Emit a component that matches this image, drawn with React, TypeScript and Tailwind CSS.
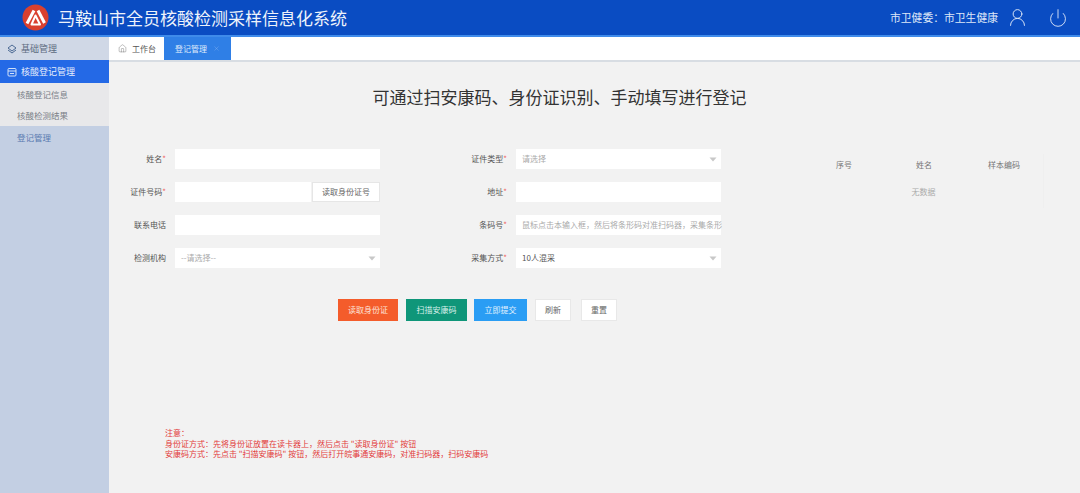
import React from 'react';
import { House, Power, UserRound, X } from 'lucide-react';

const font = 'font-["Noto_Sans_CJK_SC","Liberation_Sans",sans-serif]';

const Label = ({ text, required }: { text: string; required?: boolean }) => (
  <div className="flex justify-end items-center pr-[9px] text-[8px] text-[#555]">
    {text}
    {required && <span className="text-[#e66]">*</span>}
  </div>
);

const Input = ({ placeholder }: { placeholder?: string }) => (
  <div className="h-[20px] bg-white flex items-center pl-[6px] text-[8px] text-[#aaa] whitespace-nowrap">
    {placeholder}
  </div>
);

const Select = ({ value, dark }: { value: string; dark?: boolean }) => (
  <div className={`h-[20px] bg-white flex items-center justify-between pl-[6px] pr-[4px] text-[8px] ${dark ? 'text-[#555]' : 'text-[#aaa]'}`}>
    <span>{value}</span>
    <svg width="8" height="5" viewBox="0 0 8 5">
      <path d="M0.5 0.5 H7.5 L4 4.5 Z" fill="#c8c8c8" />
    </svg>
  </div>
);

const Logo = () => (
  <svg width="27" height="27" viewBox="0 0 27 27">
    <circle cx="13.5" cy="13.5" r="13" fill="#d9402f" />
    <path d="M5 19.5 L12 6.5" stroke="#fff" strokeWidth="3" fill="none" />
    <path d="M16 6.5 L22.5 19" stroke="#fff" strokeWidth="3" fill="none" />
    <path d="M9.5 20.5 L13.5 11.5 L18 20.5 Z" stroke="#fff" strokeWidth="2" fill="none" strokeLinejoin="round" />
  </svg>
);

export default function App() {
  return (
    <div className={`h-[493px] w-[1080px] flex flex-col overflow-hidden bg-[#f2f2f2] ${font}`}>
      {/* top bar */}
      <header className="h-[37px] shrink-0 bg-[#0a4cc2] border-b-2 border-[#3f8bea] flex items-center pl-[22px] pr-[12px]">
        <Logo />
        <h1 className="ml-[9px] text-[17px] leading-none text-[#eef3fb]">马鞍山市全员核酸检测采样信息化系统</h1>
        <div className="ml-auto flex items-center text-[#dfe8f8]">
          <span className="text-[10.8px]">市卫健委：市卫生健康</span>
          <UserRound size={21} strokeWidth={1.1} className="ml-[9px]" />
          <Power size={20} strokeWidth={1.1} className="ml-[20px]" />
        </div>
      </header>

      <div className="flex flex-1 min-h-0">
        {/* sidebar */}
        <aside className="w-[109px] shrink-0 bg-[#c3cfe3] text-[9px]">
          <div className="h-[23px] flex items-center pl-[7px] gap-[4px] bg-[#d0d8e6] text-[#5d6b80]">
            <svg width="10" height="10" viewBox="0 0 10 10" fill="none" stroke="#4c6a94" strokeWidth="1">
              <path d="M5 1 L9 4 L5 7 L1 4 Z" />
              <path d="M1 6 L5 9 L9 6" />
            </svg>
            基础管理
          </div>
          <div className="h-[23px] flex items-center pl-[7px] gap-[4px] bg-[#2469e6] text-[#e4edfb]">
            <svg width="10" height="10" viewBox="0 0 10 10" fill="none" stroke="#e4edfb" strokeWidth="0.9">
              <rect x="1" y="1.5" width="8" height="7.5" rx="1" />
              <path d="M1 4 H9 M3 6.5 H7" />
            </svg>
            核酸登记管理
          </div>
          <div className="bg-[#e8e8ea] text-[8.5px] text-[#7a7f88]">
            <div className="h-[22px] flex items-center pl-[17px]">核酸登记信息</div>
            <div className="h-[21px] flex items-center pl-[17px]">核酸检测结果</div>
          </div>
          <div className="h-[22px] flex items-center pl-[17px] text-[8.5px] text-[#5a7ab0]">登记管理</div>
        </aside>

        <main className="flex-1 min-w-0 flex flex-col">
          {/* tabs */}
          <div className="h-[23px] shrink-0 bg-white border-b-2 border-[#d8dde3] flex box-content -mb-[2px]">
            <div className="w-[55px] flex items-center pl-[9px] gap-[5px] text-[8px] text-[#555]">
              <House size={9} strokeWidth={1} />
              工作台
            </div>
            <div className="w-[67px] flex items-center pl-[11px] gap-[6px] text-[8px] bg-[#2f7fe6] text-[#dfeafb]">
              登记管理
              <X size={7} strokeWidth={1} className="text-[#a9c8f3]" />
            </div>
          </div>

          <h2 className="mt-[25px] w-[901px] text-center text-[17px] leading-[24px] text-[#333]">
            可通过扫安康码、身份证识别、手动填写进行登记
          </h2>

          <div className="mt-[40px] flex">
            {/* form */}
            <div className="w-[612px] ml-[9px] grid grid-cols-[57px_205px_136px_205px] grid-rows-[20px_20px_20px_20px] gap-y-[13px]">
              <Label text="姓名" required />
              <Input />
              <Label text="证件类型" required />
              <Select value="请选择" />

              <Label text="证件号码" required />
              <div className="flex">
                <div className="h-[20px] flex-1 bg-white" />
                <button className="h-[20px] w-[68px] ml-px bg-white text-[8px] text-[#666] border border-[#e6e6e6]">读取身份证号</button>
              </div>
              <Label text="地址" required />
              <Input />

              <Label text="联系电话" />
              <Input />
              <Label text="条码号" required />
              <Input placeholder="鼠标点击本输入框，然后将条形码对准扫码器，采集条形" />

              <Label text="检测机构" />
              <Select value="--请选择--" />
              <Label text="采集方式" required />
              <Select value="10人混采" dark />
            </div>

            {/* sample table */}
            <div className="ml-[74px] mt-[5px] w-[240px] self-start text-[8px] text-[#777] border-r border-[#efefef]">
              <div className="h-[22px] grid grid-cols-[80px_80px_80px] items-center text-center">
                <span>序号</span>
                <span>姓名</span>
                <span>样本编码</span>
              </div>
              <div className="h-[32px] flex items-center justify-center text-[#aaa]">无数据</div>
            </div>
          </div>

          {/* actions */}
          <div className="mt-[31px] ml-[229px] flex text-[8px]">
            <button className="w-[60px] h-[22px] bg-[#f45c2b] text-[#fde4da]">读取身份证</button>
            <button className="w-[61px] h-[22px] ml-[8px] bg-[#0f9679] text-[#d9f0ea]">扫描安康码</button>
            <button className="w-[53px] h-[22px] ml-[7px] bg-[#2a9df4] text-[#e2f2fe]">立即提交</button>
            <button className="w-[36px] h-[22px] ml-[8px] bg-white text-[#666] border border-[#e8e8e8]">刷新</button>
            <button className="w-[36px] h-[22px] ml-[10px] bg-white text-[#666] border border-[#e8e8e8]">重置</button>
          </div>

          {/* notes */}
          <div className="mt-[107px] ml-[56px] text-[8px] leading-[10.5px] text-[#e23b3b]">
            <p>注意：</p>
            <p>身份证方式：先将身份证放置在读卡器上，然后点击 "读取身份证" 按钮</p>
            <p>安康码方式：先点击 "扫描安康码" 按钮，然后打开皖事通安康码，对准扫码器，扫码安康码</p>
          </div>
        </main>
      </div>
    </div>
  );
}
